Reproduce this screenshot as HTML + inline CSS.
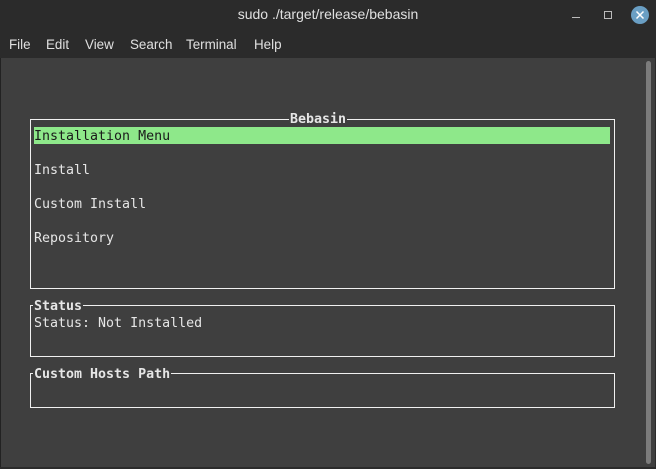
<!DOCTYPE html>
<html><head><style>
body{margin:0;width:656px;height:469px;overflow:hidden;background:#2b2b2b;position:relative;font-family:"Liberation Sans",sans-serif}
.t{position:absolute;white-space:pre}
.m{font-family:"DejaVu Sans Mono","Liberation Mono",monospace;font-size:13.3px;line-height:17px;color:#e6e6e6;position:absolute;white-space:pre}
.b{font-weight:bold}
.box{position:absolute;border:1px solid #f0f0f0}
.lbl{background:#3f3f3f;padding:0 1px}
</style></head><body>
<div class="t" style="left:0;width:656px;top:6px;text-align:center;color:#e0e0e0;font-size:14px">sudo ./target/release/bebasin</div>
<div style="position:absolute;left:572px;top:17px;width:8px;height:1px;background:#bbb"></div>
<div style="position:absolute;left:604px;top:11px;width:6px;height:6px;border:1px solid #bbb"></div>
<div style="position:absolute;left:631px;top:6px;width:18px;height:18px;border-radius:50%;background:#6a9fc4"></div>
<svg style="position:absolute;left:631px;top:6px" width="18" height="18"><path d="M5.5 5.5L12.5 12.5M12.5 5.5L5.5 12.5" stroke="#fff" stroke-width="1.5"/></svg>
<div class="t" style="top:37px;left:9px;color:#e0e0e0;font-size:13.4px">File</div>
<div class="t" style="top:37px;left:46px;color:#e0e0e0;font-size:13.4px">Edit</div>
<div class="t" style="top:37px;left:85px;color:#e0e0e0;font-size:13.4px">View</div>
<div class="t" style="top:37px;left:130px;color:#e0e0e0;font-size:13.4px">Search</div>
<div class="t" style="top:37px;left:186px;color:#e0e0e0;font-size:13.4px">Terminal</div>
<div class="t" style="top:37px;left:254px;color:#e0e0e0;font-size:13.4px">Help</div>
<div style="position:absolute;left:0;top:58px;width:654px;height:409px;background:#3f3f3f;border-left:1px solid #222"></div>
<div style="position:absolute;left:646px;top:61px;width:5px;height:403px;border-radius:3px;background:#7c7c7c"></div>

<div class="box" style="left:30px;top:119px;width:583px;height:168px"></div>
<div style="position:absolute;left:34px;top:127px;width:576px;height:17px;background:#8ee88a"></div>
<div class="m b" style="left:289px;top:111px"><span class="lbl">Bebasin</span></div>
<div class="m" style="left:34px;top:128px;color:#1a1a1a">Installation Menu</div>
<div class="m" style="left:34px;top:162px">Install</div>
<div class="m" style="left:34px;top:196px">Custom Install</div>
<div class="m" style="left:34px;top:230px">Repository</div>

<div class="box" style="left:30px;top:305px;width:583px;height:50px"></div>
<div class="m b" style="left:33px;top:298px"><span class="lbl">Status</span></div>
<div class="m" style="left:34px;top:315px">Status: Not Installed</div>

<div class="box" style="left:30px;top:373px;width:583px;height:33px"></div>
<div class="m b" style="left:33px;top:366px"><span class="lbl">Custom Hosts Path</span></div>
</body></html>
